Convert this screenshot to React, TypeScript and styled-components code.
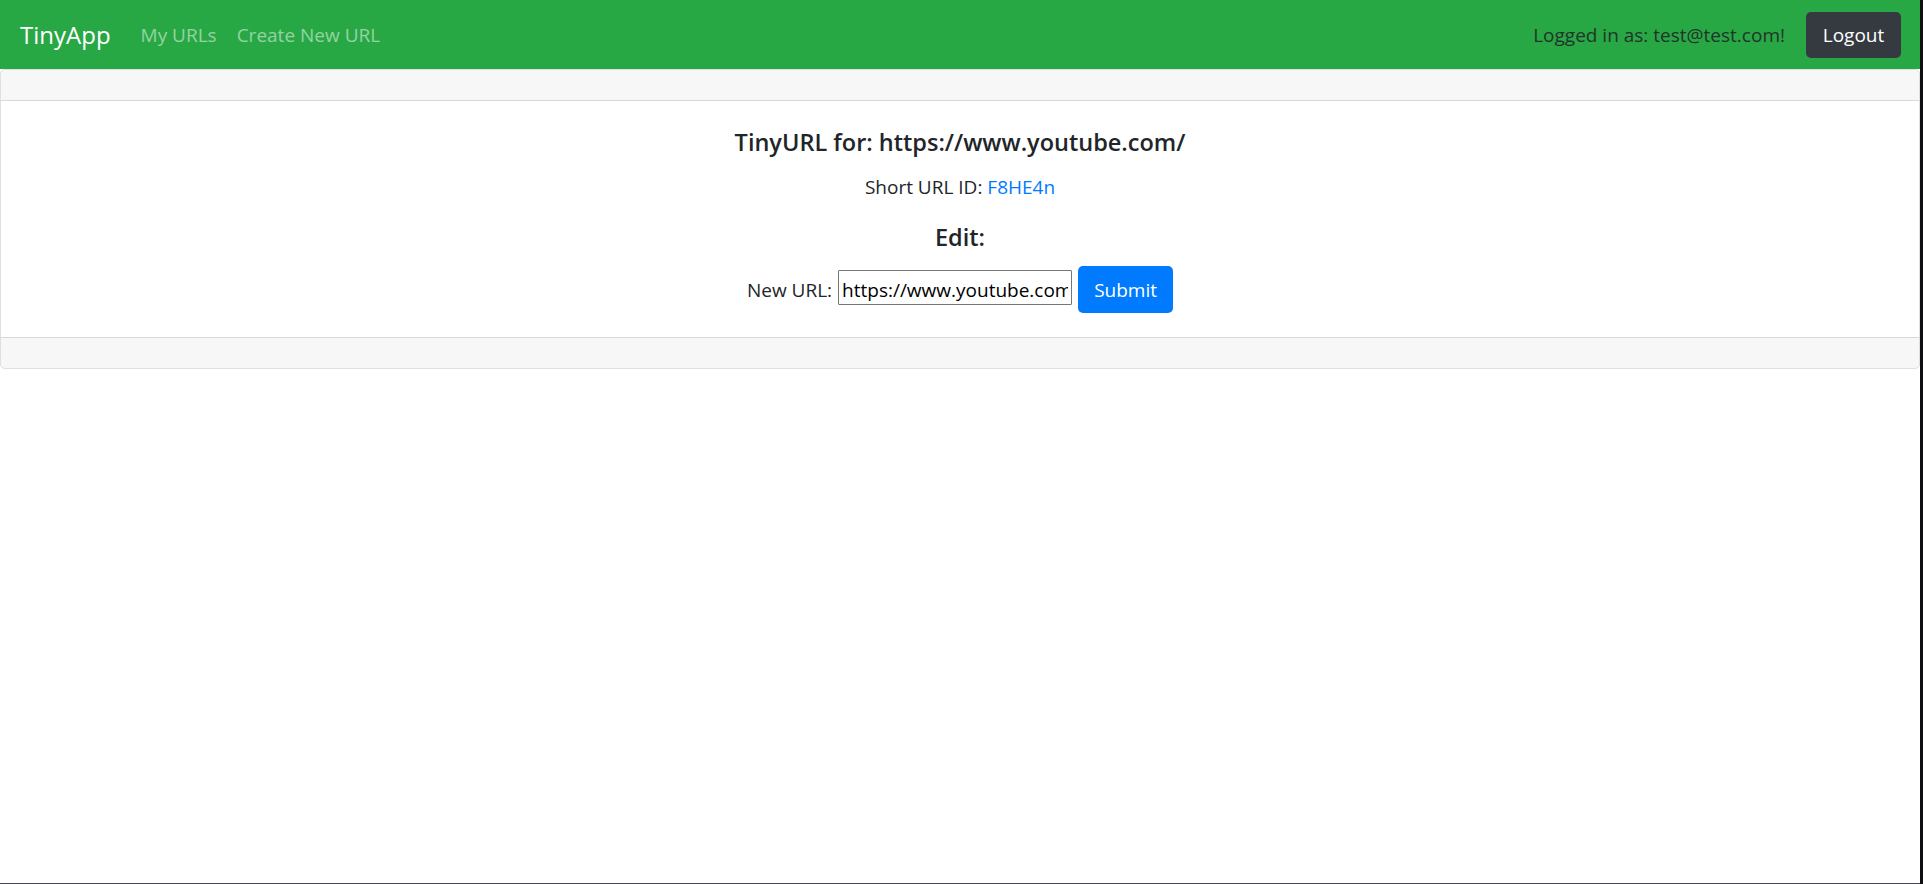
import styled, { createGlobalStyle } from 'styled-components'

// Global Styles

const GlobalStyle = createGlobalStyle`
  html {
    background: #0f0f12;
  }
  body {
    box-sizing: border-box;
    margin: 0 3px 0 0;
    min-height: 100vh;
    background: #ffffff;
    border-bottom: 1px solid #48455c;
    font-family: "Open Sans", "Noto Sans", sans-serif;
    font-size: 19px;
    line-height: 1.5;
    color: #212529;
  }
`

// Navbar Styles

const Navbar = styled.nav`
  display: flex;
  align-items: center;
  height: 69px;
  padding: 1px 19px 0 20px;
  box-sizing: border-box;
  background: #28a745;
`

const Brand = styled.a`
  font-size: 24px;
  line-height: 1.2;
  color: #ffffff;
  margin-right: 20px;
  text-decoration: none;
`

const NavLink = styled.a`
  padding: 0 10px;
  color: rgba(255, 255, 255, 0.5);
  text-decoration: none;
`

const NavRight = styled.div`
  display: flex;
  align-items: center;
  gap: 21px;
  margin-left: auto;
`

const NavText = styled.span`
  color: #22342a;
`

interface IButtonProps {
  variant: 'dark' | 'primary'
}

const Button = styled.button<IButtonProps>`
  width: 95px;
  height: ${props => (props.variant === 'dark' ? '46px' : '47px')};
  border: none;
  border-radius: 5px;
  padding: 0;
  font-family: inherit;
  font-size: 19px;
  color: #ffffff;
  background: ${props => (props.variant === 'dark' ? '#343a40' : '#007bff')};
  cursor: pointer;
`

// Card Styles

const Card = styled.div`
  border: 1px solid rgba(0, 0, 0, 0.125);
  border-radius: 5px;
  overflow: hidden;
`

const CardBand = styled.div<{ edge: 'top' | 'bottom' }>`
  height: 30px;
  background: rgba(0, 0, 0, 0.03);
  border-${props => (props.edge === 'top' ? 'bottom' : 'top')}: 1px solid rgba(0, 0, 0, 0.125);
`

const CardBody = styled.div`
  display: flex;
  flex-direction: column;
  align-items: center;
  padding: 26px 25px 24px;
  text-align: center;
`

const Heading = styled.h5<{ gap: string }>`
  margin: 0 0 ${props => props.gap};
  font-size: 23.5px;
  font-weight: 600;
  line-height: 30px;
`

const Line = styled.p`
  margin: 0 0 20px;
  line-height: 30px;
`

const Link = styled.a`
  color: #007bff;
  text-decoration: none;
`

const Form = styled.form`
  display: flex;
  align-items: baseline;
  gap: 6px;
`

const UrlInput = styled.input`
  box-sizing: border-box;
  width: 234px;
  height: 35px;
  padding: 4px 3px 0;
  border: 1px solid #767676;
  border-radius: 1px;
  font-family: inherit;
  font-size: 19px;
  color: #000000;
`

// Component

export default function App() {
  return (
    <>
      <GlobalStyle />
      <Navbar>
        <Brand href="#">TinyApp</Brand>
        <NavLink href="#">My URLs</NavLink>
        <NavLink href="#">Create New URL</NavLink>
        <NavRight>
          <NavText>Logged in as: test@test.com!</NavText>
          <Button variant="dark">Logout</Button>
        </NavRight>
      </Navbar>
      <Card>
        <CardBand edge="top" />
        <CardBody>
          <Heading gap="15px">TinyURL for: https://www.youtube.com/</Heading>
          <Line>
            Short URL ID: <Link href="#">F8HE4n</Link>
          </Line>
          <Heading gap="14px">Edit:</Heading>
          <Form onSubmit={e => e.preventDefault()}>
            <label>New URL:</label>
            <UrlInput type="text" defaultValue="https://www.youtube.com/" />
            <Button variant="primary" type="submit">
              Submit
            </Button>
          </Form>
        </CardBody>
        <CardBand edge="bottom" />
      </Card>
    </>
  )
}
